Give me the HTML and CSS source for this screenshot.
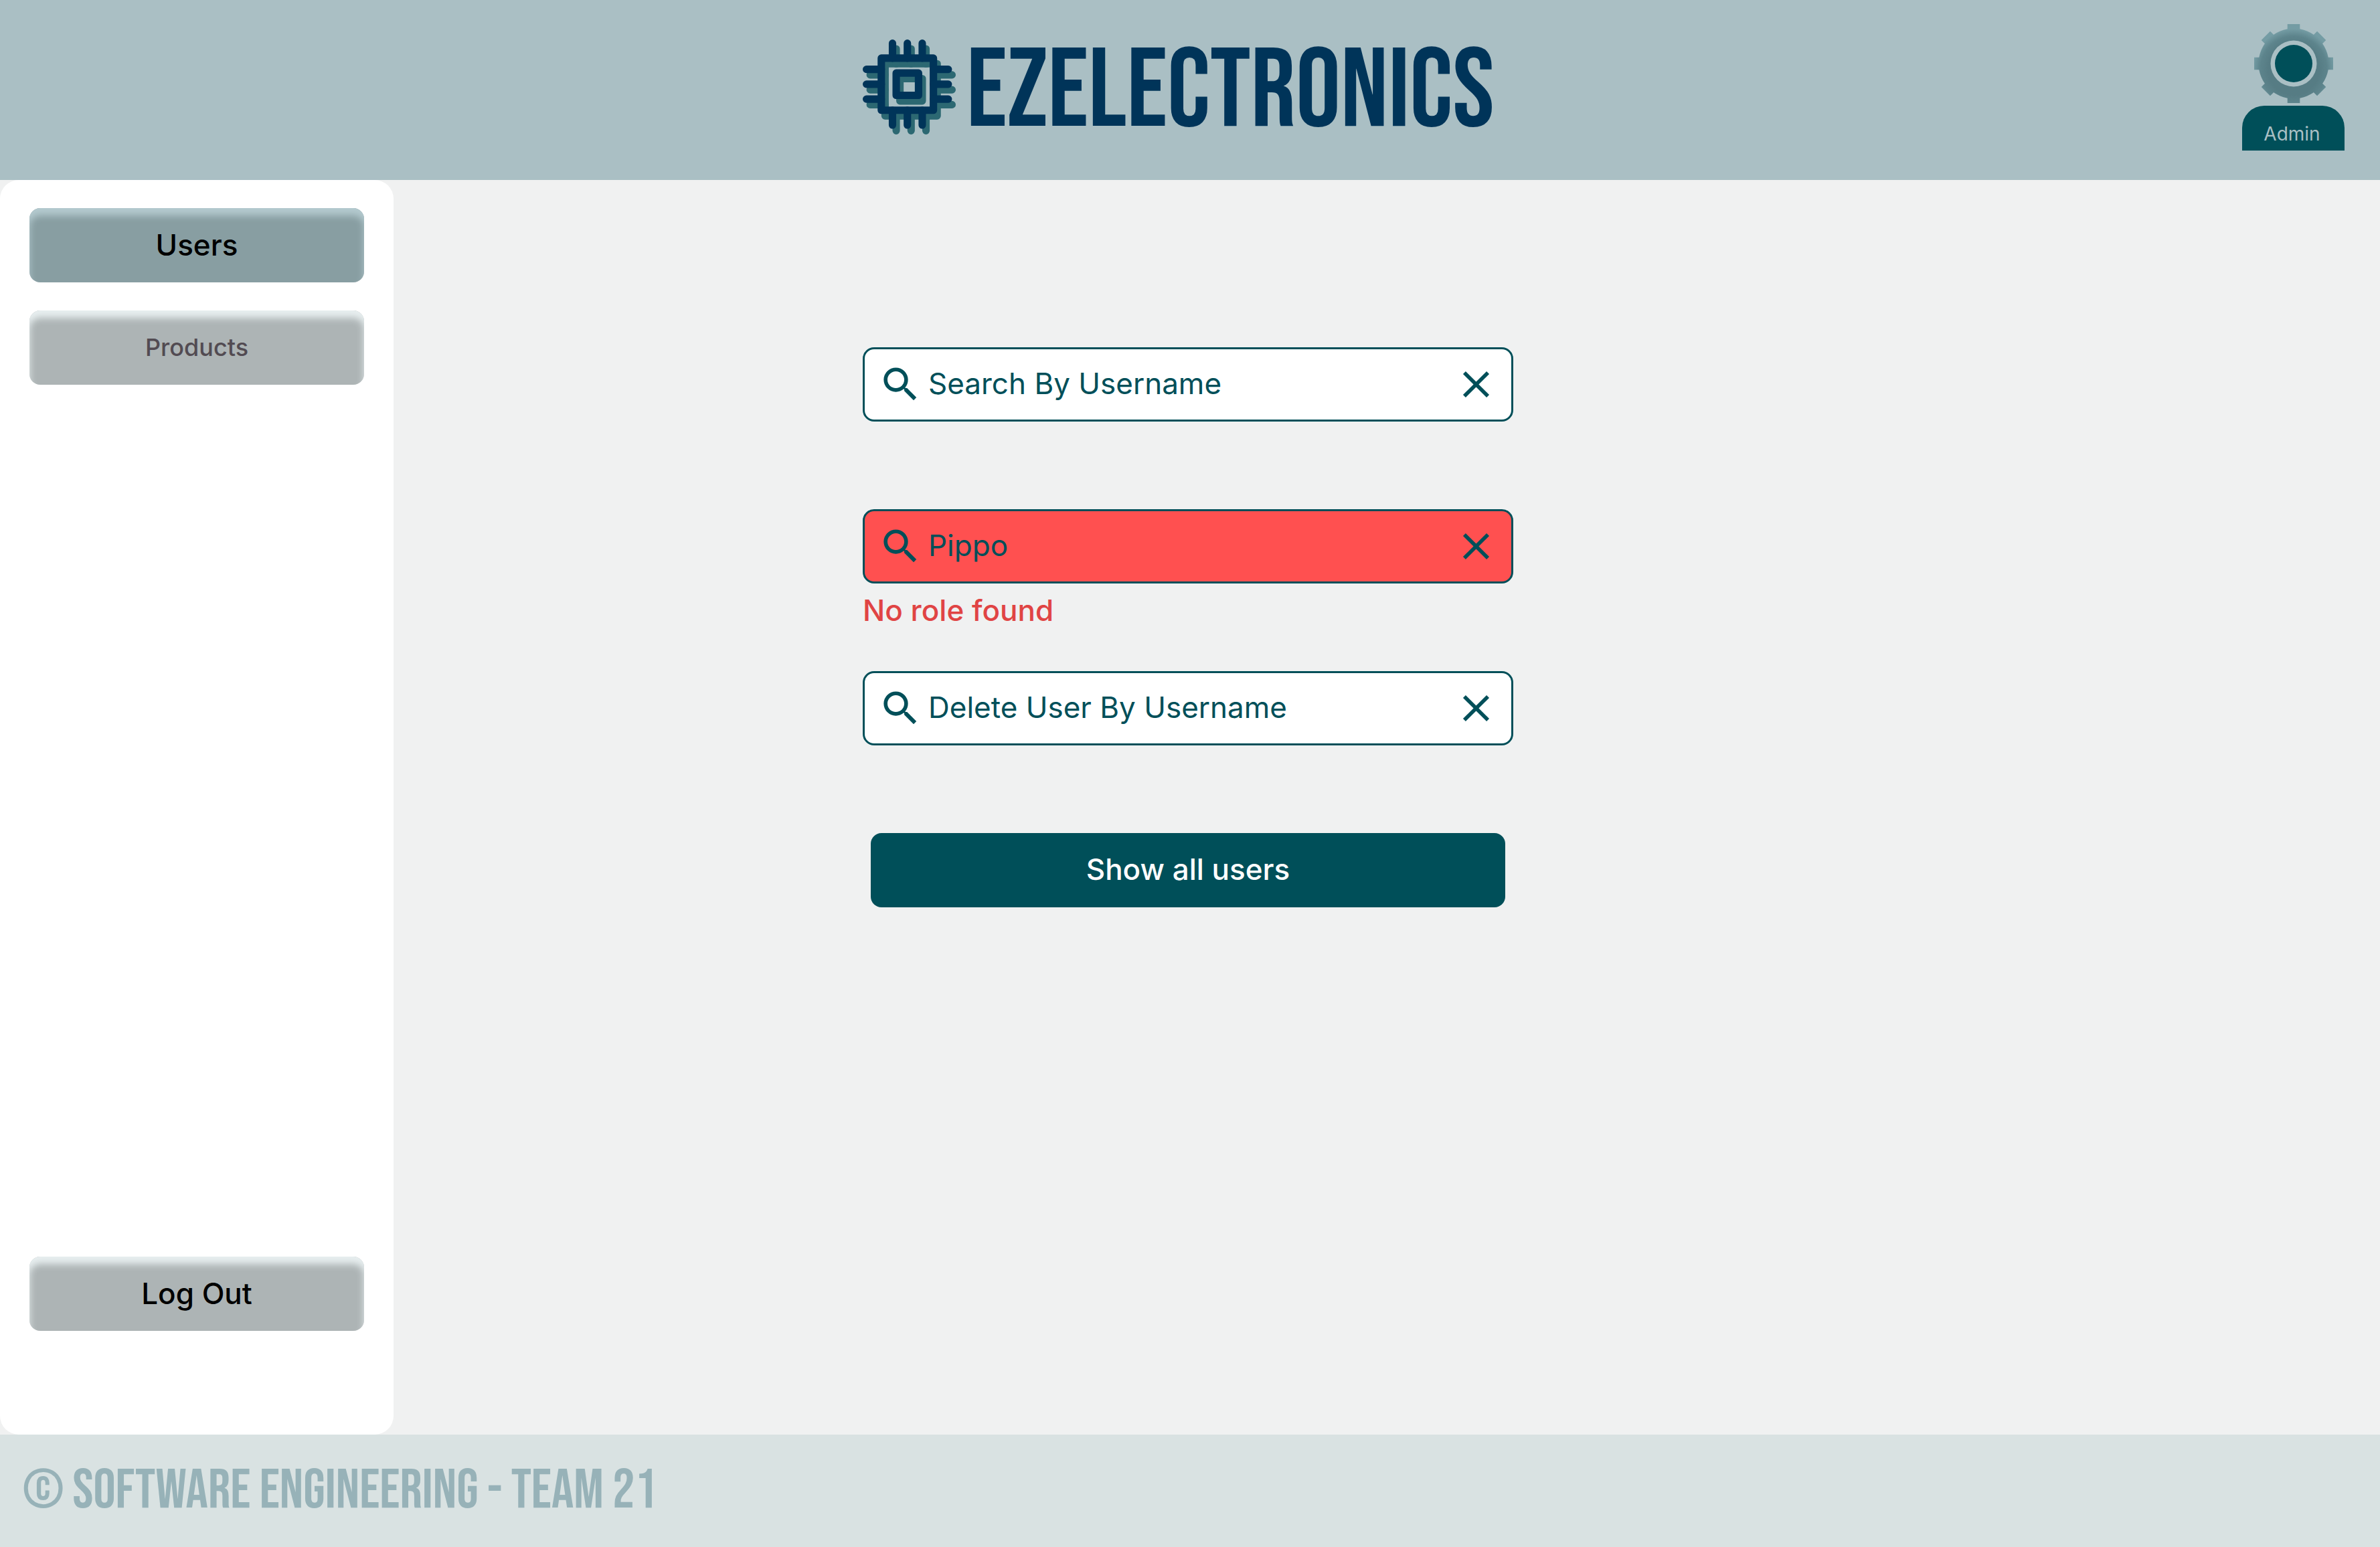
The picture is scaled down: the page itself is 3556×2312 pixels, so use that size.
FILE: index.html
```html
<!DOCTYPE html>
<html lang="en">
<head>
  <meta charset="utf-8">
  <meta name="viewport" content="width=device-width, initial-scale=1">
  <title>EZElectronics - Users</title>
  <link rel="stylesheet" href="styles.css">
</head>
<body>
  <svg class="sprite" aria-hidden="true">
    <symbol id="icon-search" viewBox="0 0 24 24">
      <path d="M15.5 14h-.79l-.28-.27A6.471 6.471 0 0 0 16 9.5 6.5 6.5 0 1 0 9.5 16c1.61 0 3.09-.59 4.23-1.57l.27.28v.79l5 4.99L20.49 19l-4.99-5zm-6 0C7.01 14 5 11.99 5 9.5S7.01 5 9.5 5 14 7.01 14 9.5 11.99 14 9.5 14z"/>
    </symbol>
    <symbol id="icon-close" viewBox="0 0 24 24">
      <path d="M19 6.41L17.59 5 12 10.59 6.41 5 5 6.41 10.59 12 5 17.59 6.41 19 12 13.41 17.59 19 19 17.59 13.41 12z"/>
    </symbol>
  </svg>

  <header class="header">
    <div class="brand">
      <svg class="brand-icon" viewBox="0 0 25 25.5" aria-hidden="true">
        <defs>
          <g id="chip" fill="none" stroke-width="2" stroke-linecap="round" stroke-linejoin="round">
            <path d="M5 5h14v14H5zM9 9h6v6H9z"/>
            <path d="M8 1v4M12 1v4M16 1v4M8 19v4M12 19v4M16 19v4M1 8h4M1 12h4M1 16h4M19 8h4M19 12h4M19 16h4"/>
          </g>
        </defs>
        <use href="#chip" x="1" y="1.5" stroke="#2c6872"/>
        <use href="#chip" stroke="#003459"/>
      </svg>
      <h1 class="brand-name">EZELECTRONICS</h1>
    </div>
    <div class="account">
      <svg class="account-gear" viewBox="-59 -59 118 118" aria-hidden="true">
        <defs>
          <radialGradient id="gear-fill" gradientUnits="userSpaceOnUse" cx="0" cy="9" r="64">
            <stop offset="0.6" stop-color="#567c84"/>
            <stop offset="0.78" stop-color="#5d848c"/>
            <stop offset="0.95" stop-color="#749ca4"/>
          </radialGradient>
        </defs>
        <g fill="url(#gear-fill)">
          <path fill-rule="evenodd" d="M0-52.5A52.5 52.5 0 1 1 0 52.5 52.5 52.5 0 1 1 0-52.5zM0-34.500A34.500 34.500 0 1 0 0 34.500 34.500 34.500 0 1 0 0-34.500z"/>
          <path d="M-9.300-59H9.300V-50H-9.300zM-9.300 50H9.300V59H-9.300zM-59-9.300H-50V9.300H-59zM50-9.300H59V9.300H50z"/>
          <path d="M35.100-48.300L48.300-35.100 42-28.800 28.800-42zM48.300 35.100L35.100 48.300 28.800 42 42 28.800zM-35.100 48.300L-48.300 35.100-42 28.800-28.800 42zM-48.300-35.100L-35.100-48.300-28.800-42-42-28.800z"/>
        </g>
        <circle r="28" fill="#004f59"/>
      </svg>
      <span class="account-role">Admin</span>
    </div>
  </header>

  <div class="body">
    <nav class="sidebar" aria-label="Main">
      <button class="nav-button nav-button-active" type="button" aria-current="page">Users</button>
      <button class="nav-button nav-button-muted" type="button">Products</button>
      <button class="nav-button nav-button-logout" type="button">Log Out</button>
    </nav>

    <main class="main">
      <form class="search-form">
        <div class="field">
          <div class="field-box">
            <label for="by-username" aria-label="Search By Username"><svg class="icon"><use href="#icon-search"/></svg></label>
            <input class="field-input" id="by-username" type="text" placeholder="Search By Username">
            <button class="field-clear" type="button" aria-label="Clear"><svg class="icon"><use href="#icon-close"/></svg></button>
          </div>
        </div>
        <div class="field">
          <div class="field-box field-box-error">
            <label for="by-role" aria-label="Search By Role"><svg class="icon"><use href="#icon-search"/></svg></label>
            <input class="field-input" id="by-role" type="text" value="Pippo" aria-invalid="true" aria-describedby="role-error">
            <button class="field-clear" type="button" aria-label="Clear"><svg class="icon"><use href="#icon-close"/></svg></button>
          </div>
          <p class="field-error" id="role-error">No role found</p>
        </div>
        <div class="field">
          <div class="field-box">
            <label for="delete-user" aria-label="Delete User By Username"><svg class="icon"><use href="#icon-search"/></svg></label>
            <input class="field-input" id="delete-user" type="text" placeholder="Delete User By Username">
            <button class="field-clear" type="button" aria-label="Clear"><svg class="icon"><use href="#icon-close"/></svg></button>
          </div>
        </div>
        <button class="show-all" type="button">Show all users</button>
      </form>
    </main>
  </div>

  <footer class="footer">
    <p class="footer-text">© SOFTWARE ENGINEERING - TEAM 21</p>
  </footer>
</body>
</html>
```
FILE: styles.css
```css
:root {
  --teal: #004f59;
  --navy: #003459;
  --mist: #aabfc4;
  --page: #f0f1f1;
  --columns: 588px minmax(0, 1fr) 594px;
  --display: "Bebas Neue", "Liberation Sans Narrow", "DejaVu Sans Condensed", sans-serif;
}

* {
  box-sizing: border-box;
}

body {
  margin: 0;
  min-height: 100vh;
  display: grid;
  grid-template-rows: auto 1fr auto;
  background: var(--page);
  font-family: Inter, "Liberation Sans", sans-serif;
  font-size: 44px;
  line-height: 56px;
}

button,
input {
  font: inherit;
}

button {
  cursor: pointer;
}

.sprite {
  position: absolute;
  width: 0;
  height: 0;
}

/* Header */
.header {
  display: grid;
  grid-template-columns: var(--columns);
  justify-items: center;
  align-items: center;
  min-height: 269px;
  padding-bottom: 9px;
  background: var(--mist);
}

.brand {
  grid-column: 2;
  width: 100%;
  max-width: 972px;
  display: flex;
  align-items: center;
  gap: 16px;
}

.brand-icon {
  flex: none;
  width: 139px;
  height: 142px;
}

.brand-name {
  margin: 0;
  padding-top: 16px;
  font-family: var(--display);
  font-size: 167px;
  line-height: 142px;
  font-weight: 400;
  color: var(--navy);
}

.account {
  grid-column: 3;
  justify-self: end;
  margin-right: 53px;
  display: flex;
  flex-direction: column;
  align-items: center;
  gap: 4px;
}

.account-gear {
  width: 118px;
  height: 118px;
}

.account-role {
  width: 153px;
  padding: 25px 4px 7px 0;
  border-radius: 33px 33px 0 0;
  background: var(--teal);
  color: var(--mist);
  font-size: 28px;
  line-height: 35px;
  text-align: center;
}

/* Sidebar and content */
.body {
  display: grid;
  grid-template-columns: var(--columns);
}

.sidebar {
  display: flex;
  flex-direction: column;
  gap: 42px;
  padding: 42px 44px 155px;
  border-radius: 28px;
  background: #fff;
}

.nav-button {
  height: 111px;
  padding: 0 0 2px;
  border: 0;
  border-radius: 16px;
  background: #adb4b5;
  box-shadow: inset 0 11px 11px #e8eff0;
  color: #000;
  font-weight: 500;
}

.nav-button-active {
  background: #889ea2;
  box-shadow: inset 0 11px 11px #b4cacf;
}

.nav-button-muted {
  color: #524b52;
  font-size: 36px;
}

.nav-button-logout {
  margin-top: auto;
}

.main {
  display: flex;
  justify-content: center;
  padding: 250px 0;
}

.search-form {
  width: 100%;
  max-width: 972px;
}

.field {
  min-height: 242px;
}

.field-box {
  display: flex;
  align-items: center;
  gap: 8px;
  height: 111px;
  padding: 0 19px 0 20px;
  border: 3px solid var(--teal);
  border-radius: 17px;
  background: #fff;
}

.field-box-error {
  background: #ff5050;
}

.icon {
  display: block;
  width: 67px;
  height: 67px;
  fill: var(--teal);
}

.field-input {
  flex: 1;
  min-width: 0;
  padding: 0 0 4px;
  border: 0;
  outline: 0;
  background: none;
  color: var(--teal);
}

.field-input::placeholder {
  color: inherit;
  opacity: 1;
}

.field-clear {
  padding: 0;
  border: 0;
  background: none;
}

.field-error {
  margin: 12px 0 0;
  color: #e04444;
  font-weight: 500;
}

.show-all {
  display: block;
  width: calc(100% - 24px);
  height: 111px;
  margin: 0 auto;
  padding: 0 0 3px;
  border: 0;
  border-radius: 16px;
  background: var(--teal);
  color: #fff;
  font-weight: 500;
}

/* Footer */
.footer {
  display: flex;
  align-items: center;
  min-height: 168px;
  padding: 0 34px;
  background: #d9e2e2;
}

.footer-text {
  margin: 0;
  font-family: var(--display);
  font-size: 83px;
  line-height: 80px;
  font-weight: 400;
  color: #97b2b8;
}
```
